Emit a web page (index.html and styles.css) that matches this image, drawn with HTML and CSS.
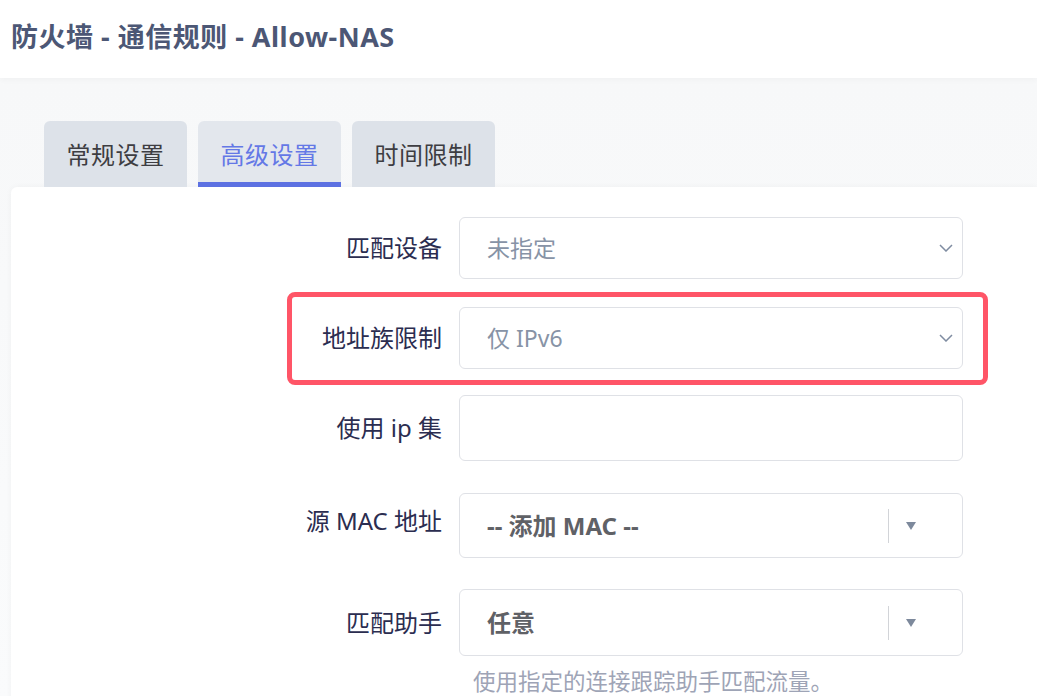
FILE: index.html
```html
<!DOCTYPE html>
<html lang="zh-CN">
<head>
<meta charset="utf-8">
<title>防火墙 - 通信规则 - Allow-NAS</title>
<link rel="stylesheet" href="styles.css">
</head>
<body>
<header class="page-header">
  <h2 class="page-title">防火墙 - 通信规则 - Allow-NAS</h2>
</header>
<main class="main">
  <ul class="tabs">
    <li class="tab">常规设置</li>
    <li class="tab tab-active">高级设置</li>
    <li class="tab">时间限制</li>
  </ul>
  <section class="panel">
    <div class="row row-1">
      <label class="label">匹配设备</label>
      <div class="field select h62">
        <span class="value muted">未指定</span>
        <svg class="chev" width="14" height="8" viewBox="0 0 14 8"><path d="M1 1 L7 7 L13 1" fill="none" stroke="#7f8ca1" stroke-width="1.5"/></svg>
      </div>
    </div>
    <div class="row row-2 highlight">
      <label class="label">地址族限制</label>
      <div class="field select h62">
        <span class="value muted">仅 IPv6</span>
        <svg class="chev" width="14" height="8" viewBox="0 0 14 8"><path d="M1 1 L7 7 L13 1" fill="none" stroke="#7f8ca1" stroke-width="1.5"/></svg>
      </div>
    </div>
    <div class="row row-3">
      <label class="label">使用 ip 集</label>
      <div class="field input h66"></div>
    </div>
    <div class="row row-4">
      <label class="label label-up">源 MAC 地址</label>
      <div class="field dropdown h65">
        <span class="value strong">-- 添加 MAC --</span>
        <span class="divider"></span>
        <span class="tri"></span>
      </div>
    </div>
    <div class="row row-5">
      <label class="label">匹配助手</label>
      <div class="field dropdown h67">
        <span class="value strong">任意</span>
        <span class="divider"></span>
        <span class="tri"></span>
      </div>
    </div>
    <p class="help">使用指定的连接跟踪助手匹配流量。</p>
  </section>
</main>
</body>
</html>
```

FILE: styles.css
```css
* { box-sizing: border-box; }

html, body {
  margin: 0;
  padding: 0;
}

body {
  width: 1037px;
  height: 696px;
  overflow: hidden;
  background: #f8f9fa;
  font-family: "Noto Sans", "Noto Sans CJK SC", sans-serif;
  color: #2b2d50;
}

.page-header {
  height: 78px;
  background: #ffffff;
  display: flex;
  align-items: center;
  padding-left: 11px;
  box-shadow: 0 2px 6px rgba(0, 0, 0, 0.03);
  position: relative;
  z-index: 1;
}

.page-title {
  margin: 0;
  margin-top: -8px;
  font-size: 27px;
  font-weight: 700;
  color: #4c5775;
  letter-spacing: 0.5px;
}

.main {
  padding: 43px 0 0 11px;
  background: linear-gradient(#f7f8f9, #fafbfc);
}

.tabs {
  list-style: none;
  margin: 0 0 0 33px;
  padding: 0;
  display: flex;
  gap: 11px;
}

.tab {
  width: 143px;
  height: 66px;
  background: #dde2e9;
  border-radius: 6px 6px 0 0;
  display: flex;
  align-items: center;
  justify-content: center;
  font-size: 24px;
  color: #3d3d42;
  padding-bottom: 2px;
  letter-spacing: 0.5px;
}

.tab-active {
  background: #e3e7ed;
  color: #6478e6;
  border-bottom: 5px solid #5d71e2;
  padding-bottom: 0;
  padding-top: 3px;
}

.panel {
  background: #ffffff;
  border-radius: 6px 0 0 0;
  box-shadow: 0 0 6px rgba(0, 0, 0, 0.04);
  padding-top: 30px;
  height: 520px;
}

.row {
  display: flex;
  align-items: center;
  position: relative;
}

.row-2 { margin-top: 28px; }
.row-3 { margin-top: 26px; }
.row-4 { margin-top: 32px; }
.row-5 { margin-top: 31px; }

.highlight::after {
  content: "";
  position: absolute;
  top: -15px;
  bottom: -16px;
  left: 276px;
  right: 49px;
  border: 5px solid #ff5567;
  border-radius: 8px;
  pointer-events: none;
}

.label {
  width: 431px;
  text-align: right;
  font-size: 24px;
  color: #2b2d50;
  margin-right: 17px;
  line-height: 1;
}

.label-up {
  position: relative;
  top: -5px;
}

.field {
  width: 504px;
  border: 1px solid #dfe1e6;
  border-radius: 6px;
  background: #ffffff;
  display: flex;
  align-items: center;
  padding-left: 27px;
}

.h62 { height: 62px; }
.h65 { height: 65px; }
.h66 { height: 66px; }
.h67 { height: 67px; }

.value {
  font-size: 23px;
  line-height: 1;
}

.muted {
  color: #8793a6;
}

.strong {
  color: #5f6166;
  font-weight: 700;
  font-size: 24px;
}

.chev {
  margin-left: auto;
  margin-right: 9px;
}

.dropdown .value {
  flex: 1;
}

.divider {
  width: 1px;
  height: 34px;
  background: #d2d4d8;
  margin-right: 17px;
}

.tri {
  width: 0;
  height: 0;
  border-left: 5.5px solid transparent;
  border-right: 5.5px solid transparent;
  border-top: 8px solid #7d899c;
  margin-right: 46px;
}

.help {
  margin: 12px 0 0 462px;
  font-size: 22.5px;
  color: #9ea4b6;
  line-height: 1.2;
}
```
